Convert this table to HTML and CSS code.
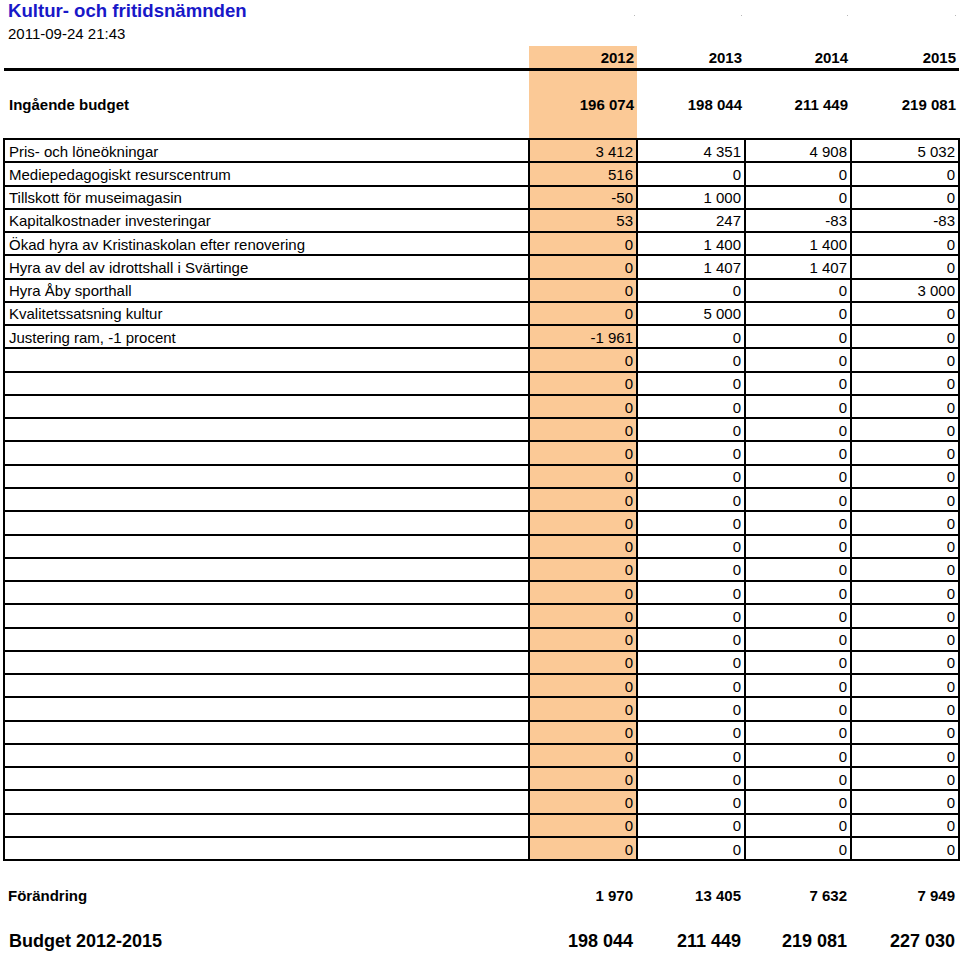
FILE: index.html
```html
<!DOCTYPE html>
<html lang="sv">
<head>
<meta charset="utf-8">
<title>Kultur- och fritidsnämnden</title>
<link rel="stylesheet" href="styles.css">
</head>
<body>
<div class="page">
  <div class="top">
    <div class="titles">
      <h1 class="title">Kultur- och fritidsnämnden</h1>
      <div class="date">2011-09-24 21:43</div>
    </div>
    <div class="mark"><span></span></div>
    <div class="mark"><span></span></div>
    <div class="mark"><span></span></div>
    <div class="mark"><span></span></div>
  </div>
  <table class="sheet">
    <colgroup>
      <col class="c-label"><col class="c-num"><col class="c-num"><col class="c-num2"><col class="c-num">
    </colgroup>
    <tr class="years">
      <td></td><td class="hl">2012</td><td>2013</td><td>2014</td><td>2015</td>
    </tr>
    <tr class="opening">
      <td class="lbl">Ingående budget</td><td class="hl">196 074</td><td>198 044</td><td>211 449</td><td>219 081</td>
    </tr>
    <tr class="row"><td class="lbl">Pris- och löneökningar</td><td class="hl">3 412</td><td>4 351</td><td>4 908</td><td>5 032</td></tr>
    <tr class="row"><td class="lbl">Mediepedagogiskt resurscentrum</td><td class="hl">516</td><td>0</td><td>0</td><td>0</td></tr>
    <tr class="row"><td class="lbl">Tillskott för museimagasin</td><td class="hl">-50</td><td>1 000</td><td>0</td><td>0</td></tr>
    <tr class="row"><td class="lbl">Kapitalkostnader investeringar</td><td class="hl">53</td><td>247</td><td>-83</td><td>-83</td></tr>
    <tr class="row"><td class="lbl">Ökad hyra av Kristinaskolan efter renovering</td><td class="hl">0</td><td>1 400</td><td>1 400</td><td>0</td></tr>
    <tr class="row"><td class="lbl">Hyra av del av idrottshall i Svärtinge</td><td class="hl">0</td><td>1 407</td><td>1 407</td><td>0</td></tr>
    <tr class="row"><td class="lbl">Hyra Åby sporthall</td><td class="hl">0</td><td>0</td><td>0</td><td>3 000</td></tr>
    <tr class="row"><td class="lbl">Kvalitetssatsning kultur</td><td class="hl">0</td><td>5 000</td><td>0</td><td>0</td></tr>
    <tr class="row"><td class="lbl">Justering ram, -1 procent</td><td class="hl">-1 961</td><td>0</td><td>0</td><td>0</td></tr>
    <tr class="row"><td class="lbl"></td><td class="hl">0</td><td>0</td><td>0</td><td>0</td></tr>
    <tr class="row"><td class="lbl"></td><td class="hl">0</td><td>0</td><td>0</td><td>0</td></tr>
    <tr class="row"><td class="lbl"></td><td class="hl">0</td><td>0</td><td>0</td><td>0</td></tr>
    <tr class="row"><td class="lbl"></td><td class="hl">0</td><td>0</td><td>0</td><td>0</td></tr>
    <tr class="row"><td class="lbl"></td><td class="hl">0</td><td>0</td><td>0</td><td>0</td></tr>
    <tr class="row"><td class="lbl"></td><td class="hl">0</td><td>0</td><td>0</td><td>0</td></tr>
    <tr class="row"><td class="lbl"></td><td class="hl">0</td><td>0</td><td>0</td><td>0</td></tr>
    <tr class="row"><td class="lbl"></td><td class="hl">0</td><td>0</td><td>0</td><td>0</td></tr>
    <tr class="row"><td class="lbl"></td><td class="hl">0</td><td>0</td><td>0</td><td>0</td></tr>
    <tr class="row"><td class="lbl"></td><td class="hl">0</td><td>0</td><td>0</td><td>0</td></tr>
    <tr class="row"><td class="lbl"></td><td class="hl">0</td><td>0</td><td>0</td><td>0</td></tr>
    <tr class="row"><td class="lbl"></td><td class="hl">0</td><td>0</td><td>0</td><td>0</td></tr>
    <tr class="row"><td class="lbl"></td><td class="hl">0</td><td>0</td><td>0</td><td>0</td></tr>
    <tr class="row"><td class="lbl"></td><td class="hl">0</td><td>0</td><td>0</td><td>0</td></tr>
    <tr class="row"><td class="lbl"></td><td class="hl">0</td><td>0</td><td>0</td><td>0</td></tr>
    <tr class="row"><td class="lbl"></td><td class="hl">0</td><td>0</td><td>0</td><td>0</td></tr>
    <tr class="row"><td class="lbl"></td><td class="hl">0</td><td>0</td><td>0</td><td>0</td></tr>
    <tr class="row"><td class="lbl"></td><td class="hl">0</td><td>0</td><td>0</td><td>0</td></tr>
    <tr class="row"><td class="lbl"></td><td class="hl">0</td><td>0</td><td>0</td><td>0</td></tr>
    <tr class="row"><td class="lbl"></td><td class="hl">0</td><td>0</td><td>0</td><td>0</td></tr>
    <tr class="row"><td class="lbl"></td><td class="hl">0</td><td>0</td><td>0</td><td>0</td></tr>
    <tr class="row"><td class="lbl"></td><td class="hl">0</td><td>0</td><td>0</td><td>0</td></tr>
  </table>
  <table class="summary">
    <colgroup>
      <col class="c-label"><col class="c-num"><col class="c-num"><col class="c-num2"><col class="c-num">
    </colgroup>
    <tr class="change">
      <td class="lbl">Förändring</td><td>1 970</td><td>13 405</td><td>7 632</td><td>7 949</td>
    </tr>
    <tr class="total">
      <td class="lbl">Budget 2012-2015</td><td>198 044</td><td>211 449</td><td>219 081</td><td>227 030</td>
    </tr>
  </table>
</div>
</body>
</html>
```
FILE: styles.css
```css
html, body {
  margin: 0;
  padding: 0;
  background: #ffffff;
}

body {
  font-family: "Liberation Sans", Arial, sans-serif;
  color: #000000;
}

.page {
  width: 960px;
  padding-left: 3px;
  box-sizing: border-box;
}

.top {
  display: grid;
  grid-template-columns: 526px 108px 107px 106px 108px;
  height: 46px;
}

.titles {
  padding-left: 5px;
}

.title {
  margin: 0;
  padding-top: 0;
  font-size: 18.6px;
  line-height: 21px;
  font-weight: bold;
  color: #1818c8;
}

.date {
  margin-top: 4px;
  font-size: 15px;
  line-height: 17px;
}

.mark {
  display: flex;
  justify-content: flex-end;
  padding-top: 15px;
  padding-right: 2px;
}

.mark span {
  display: block;
  width: 1px;
  height: 1px;
  background: #b8b8b8;
}

.sheet,
.summary {
  border-collapse: collapse;
  table-layout: fixed;
  width: 954px;
}

.c-label { width: 525px; }
.c-num { width: 108px; }
.c-num2 { width: 106px; }

.sheet td,
.summary td {
  padding: 0 3px 0 4px;
  text-align: right;
  font-size: 15px;
  white-space: nowrap;
  overflow: hidden;
}

.sheet td.lbl,
.summary td.lbl {
  text-align: left;
}

.sheet td.hl {
  background: #fbc996;
}

.years td {
  height: 20px;
  vertical-align: bottom;
  font-weight: bold;
  padding-bottom: 2px;
  line-height: 16px;
  border-bottom: 3px solid #000000;
}

.opening td {
  height: 67px;
  vertical-align: middle;
  font-weight: bold;
  line-height: 16px;
}

.opening td.lbl {
  padding-left: 5px;
}

.row td {
  height: 19.28px;
  line-height: 16px;
  padding-top: 2px;
  vertical-align: middle;
  border: 2px solid #000000;
}

.change td {
  height: 70px;
  vertical-align: middle;
  font-weight: bold;
  line-height: 16px;
}

.change td.lbl {
  padding-left: 5px;
}

.total td {
  height: 20px;
  vertical-align: middle;
  font-weight: bold;
  font-size: 18px;
  line-height: 20px;
}

.total td.lbl {
  padding-left: 6px;
}
```
